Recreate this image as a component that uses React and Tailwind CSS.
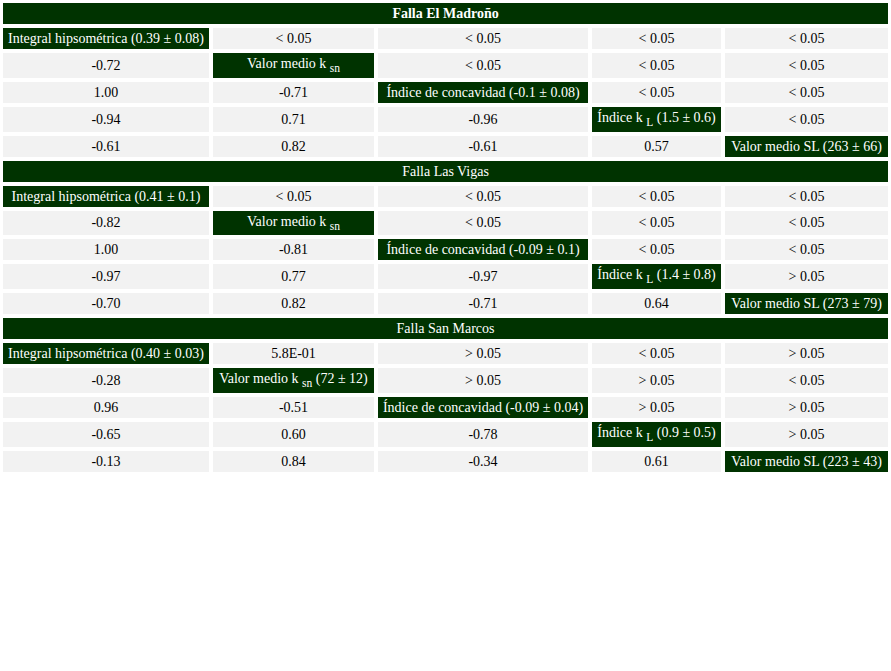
import React from "react";

const sections = [
  {
    title: "Falla El Madroño",
    bold: true,
    rows: [
      ["H:Integral hipsométrica (0.39 ± 0.08)", "< 0.05", "< 0.05", "< 0.05", "< 0.05"],
      ["-0.72", "KSN:", "< 0.05", "< 0.05", "< 0.05"],
      ["1.00", "-0.71", "H:Índice de concavidad (-0.1 ± 0.08)", "< 0.05", "< 0.05"],
      ["-0.94", "0.71", "-0.96", "KL:(1.5 ± 0.6)", "< 0.05"],
      ["-0.61", "0.82", "-0.61", "0.57", "H:Valor medio SL (263 ± 66)"],
    ],
  },
  {
    title: "Falla Las Vigas",
    bold: false,
    rows: [
      ["H:Integral hipsométrica (0.41 ± 0.1)", "< 0.05", "< 0.05", "< 0.05", "< 0.05"],
      ["-0.82", "KSN:", "< 0.05", "< 0.05", "< 0.05"],
      ["1.00", "-0.81", "H:Índice de concavidad (-0.09 ± 0.1)", "< 0.05", "< 0.05"],
      ["-0.97", "0.77", "-0.97", "KL:(1.4 ± 0.8)", "> 0.05"],
      ["-0.70", "0.82", "-0.71", "0.64", "H:Valor medio SL (273 ± 79)"],
    ],
  },
  {
    title: "Falla San Marcos",
    bold: false,
    rows: [
      ["H:Integral hipsométrica (0.40 ± 0.03)", "5.8E-01", "> 0.05", "< 0.05", "> 0.05"],
      ["-0.28", "KSN:(72 ± 12)", "> 0.05", "> 0.05", "< 0.05"],
      ["0.96", "-0.51", "H:Índice de concavidad (-0.09 ± 0.04)", "> 0.05", "> 0.05"],
      ["-0.65", "0.60", "-0.78", "KL:(0.9 ± 0.5)", "> 0.05"],
      ["-0.13", "0.84", "-0.34", "0.61", "H:Valor medio SL (223 ± 43)"],
    ],
  },
];

const subCls = "static align-sub text-[11.5px] leading-[16px]";

function Cell({ v }) {
  const dark = "bg-[#003300] text-white";
  const light = "bg-[#f2f2f2] text-black";
  const base = "px-[3px] py-[2px] leading-[17px] text-center whitespace-nowrap align-middle";
  if (v.startsWith("H:")) {
    return <td className={`${base} ${dark}`}>{v.slice(2)}</td>;
  }
  if (v.startsWith("KSN:")) {
    const rest = v.slice(4);
    return (
      <td className={`${base} ${dark}`}>
        Valor medio k <sub className={subCls}>sn</sub>
        {rest ? " " + rest : ""}
      </td>
    );
  }
  if (v.startsWith("KL:")) {
    return (
      <td className={`${base} ${dark}`}>
        Índice k <sub className={subCls}>L</sub> {v.slice(3)}
      </td>
    );
  }
  return <td className={`${base} ${light}`}>{v}</td>;
}

export default function App() {
  return (
    <div className="w-full overflow-hidden bg-white font-['Liberation_Serif','Times_New_Roman',serif]">
      <table className="border-separate border-spacing-[4px] -ml-px -mt-px w-[calc(100%+2px)] text-[14px] table-fixed font-['Liberation_Serif','Times_New_Roman',serif]">
        <colgroup>
          <col className="w-[206px]" />
          <col className="w-[161px]" />
          <col className="w-[210px]" />
          <col className="w-[129px]" />
          <col className="w-[163px]" />
        </colgroup>
        <tbody>
          {sections.map((s) => (
            <React.Fragment key={s.title}>
              <tr>
                <td
                  colSpan={5}
                  className={`bg-[#003300] text-white text-center px-[3px] py-[2px] leading-[17px] ${s.bold ? "font-bold" : "font-normal"}`}
                >
                  {s.title}
                </td>
              </tr>
              {s.rows.map((r, i) => (
                <tr key={i}>
                  {r.map((v, j) => (
                    <Cell key={j} v={v} />
                  ))}
                </tr>
              ))}
            </React.Fragment>
          ))}
        </tbody>
      </table>
    </div>
  );
}
